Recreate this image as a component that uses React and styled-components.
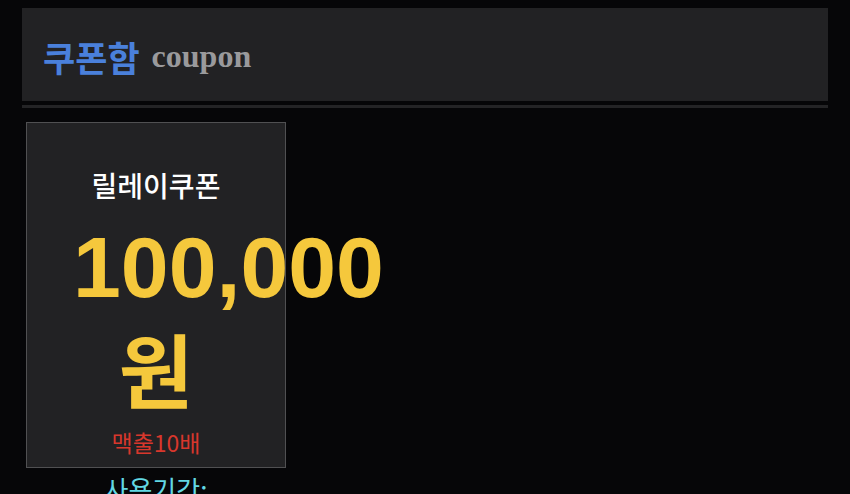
import React from 'react';
import styled, { createGlobalStyle } from 'styled-components';

const GlobalStyle = createGlobalStyle`
  html, body {
    margin: 0;
    padding: 0;
    background: #060608;
    overflow: hidden;
  }
  body {
    font-family: "Liberation Sans", "Noto Sans CJK KR", sans-serif;
  }
`;

const Page = styled.div`
  padding: 8px 22px 0 22px;
  height: 494px;
  box-sizing: border-box;
`;

const Header = styled.div`
  display: flex;
  align-items: center;
  gap: 12px;
  height: 93px;
  padding: 4px 0 0 21px;
  box-sizing: border-box;
  background: #222224;
`;

const Title = styled.span`
  font-family: "Noto Sans CJK KR", sans-serif;
  font-size: 35px;
  font-weight: 700;
  color: #4a80db;
`;

const SubTitle = styled.span`
  font-family: "Liberation Serif", serif;
  font-size: 32px;
  font-weight: 700;
  color: #9a9a9c;
`;

const Divider = styled.div`
  margin-top: 4px;
  height: 3px;
  background: #242426;
`;

const Card = styled.div`
  margin: 14px 0 0 4px;
  width: 260px;
  height: 346px;
  box-sizing: border-box;
  border: 1px solid #505052;
  background: #222224;
  padding: 44px 48px 0 48px;
  text-align: center;
  font-family: "Noto Sans CJK KR", sans-serif;
`;

const CouponName = styled.div`
  font-size: 28px;
  font-weight: 500;
  color: #ffffff;
  line-height: 36px;
`;

const Amount = styled.div`
  margin-top: 12px;
  margin-left: -2px;
  font-family: "Liberation Sans", "Noto Sans CJK KR", sans-serif;
  font-size: 86px;
  font-weight: 700;
  color: #f5c83c;
  line-height: 104px;
  white-space: nowrap;
`;

const Won = styled.div`
  margin-top: -2px;
  font-family: "Noto Sans CJK KR", sans-serif;
  font-size: 81px;
  font-weight: 700;
  color: #f5c83c;
  line-height: 100px;
`;

const Note = styled.div`
  margin-top: 10px;
  font-size: 23px;
  color: #d8372c;
  line-height: 30px;
`;

const Period = styled.div`
  width: 260px;
  margin: 4px 0 0 4px;
  text-align: center;
  font-family: "Noto Sans CJK KR", sans-serif;
  font-size: 26px;
  color: #62d8e4;
  line-height: 34px;
`;

export default function App() {
  return (
    <>
      <GlobalStyle />
      <Page>
        <Header>
          <Title>쿠폰함</Title>
          <SubTitle>coupon</SubTitle>
        </Header>
        <Divider />
        <Card>
          <CouponName>릴레이쿠폰</CouponName>
          <Amount>100,000</Amount>
          <Won>원</Won>
          <Note>맥출10배</Note>
        </Card>
        <Period>사용기간:</Period>
      </Page>
    </>
  );
}
